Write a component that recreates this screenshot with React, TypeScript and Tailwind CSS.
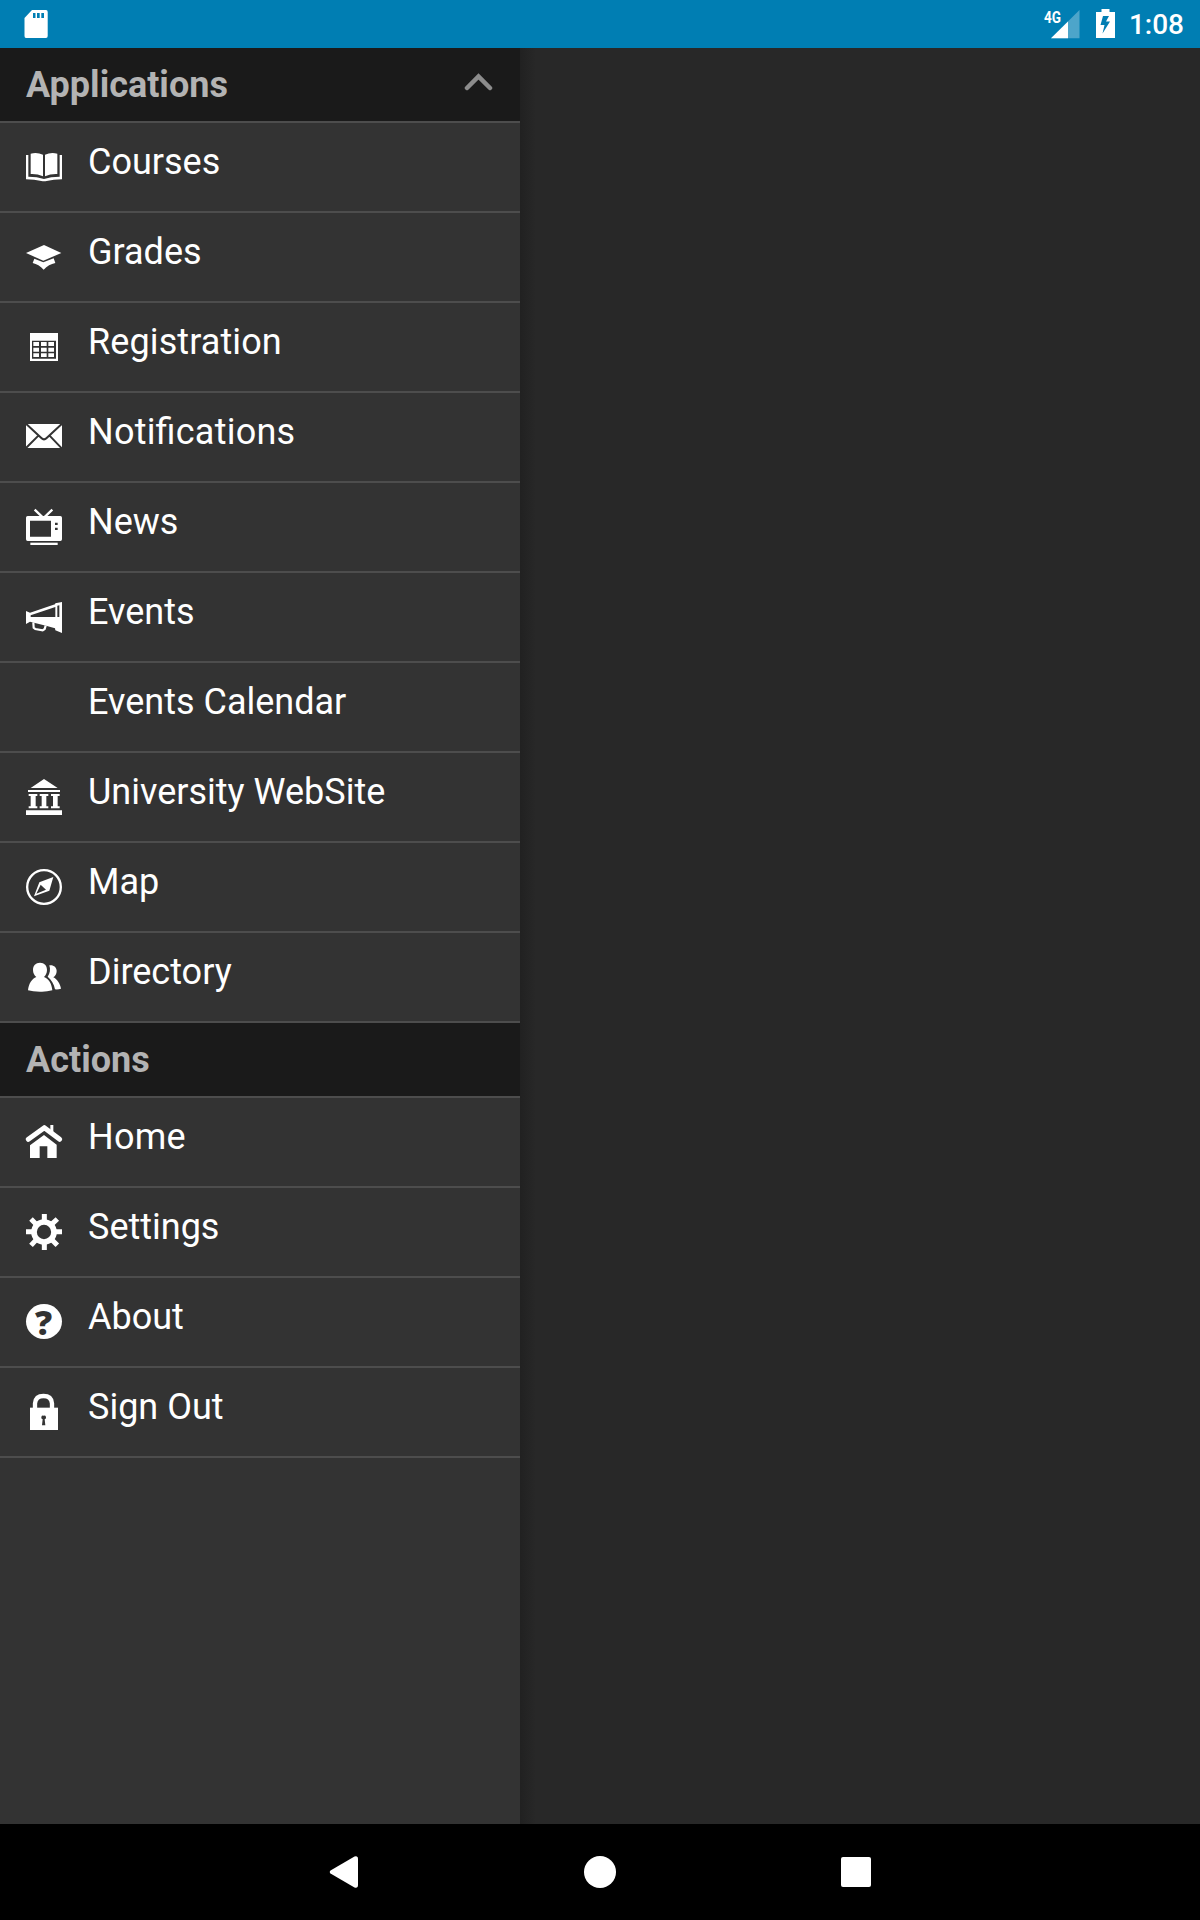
import React from "react";
import clsx from "clsx";

const icons: Record<string, React.ReactNode> = {
  courses: (
    <>
      <path d="M0 18H7V83Q34 83 54 90Q74 83 101 83V18H108V91Q82 91 62 96Q54 98 46 96Q26 91 0 91Z" />
      <path d="M14 14Q33 9 51 17V82Q34 74 14 75Z" />
      <path d="M57 17Q75 9 94 14V75Q74 74 57 82Z" />
    </>
  ),
  grades: (
    <>
      <path d="M0 42L54 18L106 42L52 65Z" />
      <path d="M25 59L52 70L83 58L88 72Q68 76 53 92Q38 76 20 72Z" />
    </>
  ),
  registration: (
    <>
      <path fillRule="evenodd" d="M12 12H96V96H12ZM18 35V89H90V35Z" />
      <path d="M22 39H39V51H22ZM45 39H62V51H45ZM67 39H84V51H67ZM22 56H39V68H22ZM45 56H62V68H45ZM67 56H84V68H67ZM22 73H39V84H22ZM45 73H62V84H45ZM67 73H84V84H67Z" />
    </>
  ),
  notifications: (
    <>
      <path d="M0 15H108V87H0Z" />
      <path d="M0 14L46 57Q54 65 62 57L108 14M38 49L0 87M70 49L108 89" fill="none" stroke="#333" strokeWidth="6" />
    </>
  ),
  news: (
    <>
      <path d="M26 2L51 26M79 2L54 26" fill="none" stroke="#fff" strokeWidth="7" />
      <path
        fillRule="evenodd"
        d="M5 21H103Q108 21 108 26V91Q108 96 103 96H5Q0 96 0 91V26Q0 21 5 21ZM12 35V83H75V35ZM87 41V48H95V41ZM87 56V63H95V56Z"
      />
      <path d="M13 101H95V108H13Z" />
    </>
  ),
  events: (
    <>
      <path
        fillRule="evenodd"
        d="M0 36L12 41L87 16L88 13L108 9V102L88 94L87 88L60 80L12 68L0 75ZM14 49V54H88V24ZM94 20V54H100V19Z"
      />
      <path d="M22 70L23 86L28 90L50 94L56 90L59 80" fill="none" stroke="#fff" strokeWidth="6.500" />
    </>
  ),
  university: (
    <path d="M54 0L95 27H14ZM6 33H102V39H6ZM8 45H34V51H29V82H34V88H8V82H14V51H8ZM41 45H67V51H61V82H67V88H41V82H47V51H41ZM75 45H101V51H95V82H101V88H75V82H81V51H75ZM0 94H108V108H0Z" />
  ),
  map: (
    <>
      <circle cx="54" cy="54" r="50.500" fill="none" stroke="#fff" strokeWidth="7" />
      <path fillRule="evenodd" d="M82 24L70 65L24 82L40 40ZM44 47L31 74L60 62Z" />
    </>
  ),
  directory: (
    <>
      <path d="M42 11C55 11 63 20 63 33C63 42 59 50 54 54C67 59 77 72 79 94Q60 99 42 98Q20 98 6 94C8 74 18 59 31 54C25 50 21 42 21 33C21 20 29 11 42 11Z" />
      <path d="M70 19C82 17 92 24 92 36C92 45 88 51 82 55C94 61 103 75 105 89Q97 92 87 91C84 75 76 62 65 53C72 44 74 30 70 19Z" />
    </>
  ),
  home: (
    <>
      <path d="M7 46L55 11L101 46" fill="none" stroke="#fff" strokeWidth="15" strokeLinecap="round" strokeLinejoin="round" />
      <path d="M73 3H82V26H73Z" />
      <path d="M54 33L92 62V102H64V67H41V102H12V64Z" />
    </>
  ),
  settings: (
    <>
      <circle cx="54" cy="54" r="30" fill="none" stroke="#fff" strokeWidth="17" />
      <path
        d="M55 0V20M55 88V108M0 53H20M88 53H108M15 15L29 29M79 79L94 94M94 15L79 29M15 94L29 79"
        fill="none"
        stroke="#fff"
        strokeWidth="15"
      />
    </>
  ),
  about: (
    <>
      <ellipse cx="54" cy="52.5" rx="54" ry="52.5" />
      <text x="53" y="94" textAnchor="middle" fill="#333" fontFamily="'Open Sans', sans-serif" fontWeight="800" fontSize="102">
        ?
      </text>
    </>
  ),
  signout: (
    <>
      <path d="M27 44V28Q29 6 52.500 6Q76 6 78 28V44" fill="none" stroke="#fff" strokeWidth="13" />
      <path d="M12 41H96V108H12Z" />
      <path d="M53 65A5.500 5.500 0 0 1 56 76L58 94H48L50 76A5.500 5.500 0 0 1 53 65Z" fill="#333" />
    </>
  ),
};

interface MenuItemProps {
  label: string;
  icon?: string;
  textClass?: string;
}

const applications: MenuItemProps[] = [
  { label: "Courses", icon: "courses" },
  { label: "Grades", icon: "grades" },
  { label: "Registration", icon: "registration", textClass: "tracking-[0.1px]" },
  {
    label: "Notifications",
    icon: "notifications",
    textClass: "tracking-[0.22px] [font-feature-settings:'liga']",
  },
  { label: "News", icon: "news" },
  { label: "Events", icon: "events" },
  { label: "Events Calendar" },
  { label: "University WebSite", icon: "university" },
  { label: "Map", icon: "map" },
  { label: "Directory", icon: "directory" },
];

const actions: MenuItemProps[] = [
  { label: "Home", icon: "home", textClass: "tracking-[0.25px]" },
  { label: "Settings", icon: "settings" },
  { label: "About", icon: "about" },
  { label: "Sign Out", icon: "signout" },
];

const MenuItem: React.FC<MenuItemProps> = ({ label, icon, textClass }) => (
  <li className="flex h-[90px] items-start border-b-2 border-[#4d4d4d] pl-[26px]">
    <svg viewBox="0 0 108 108" className="mt-[26px] size-9 shrink-0 overflow-visible fill-white">
      {icon && icons[icon]}
    </svg>
    <span className={clsx("ml-[26px] mt-[18px] text-[36px] leading-[42px] text-white", textClass)}>
      {label}
    </span>
  </li>
);

interface SectionHeaderProps {
  title: string;
  children?: React.ReactNode;
}

const SectionHeader: React.FC<SectionHeaderProps> = ({ title, children }) => (
  <div className="flex h-[75px] items-start justify-between border-b-2 border-[#4d4d4d] bg-[#1a1a1a] pl-[26px] pr-[26px]">
    <h2 className="mt-4 text-[36px] leading-[42px] font-bold text-[#b3b3b3]">{title}</h2>
    {children}
  </div>
);

const StatusBar = () => (
  <header className="flex h-12 shrink-0 items-start bg-[#007eb3] pl-6 pr-4 text-white">
    <svg viewBox="0 0 24 28" className="mt-2.5 h-7 w-6 fill-white">
      <path
        fillRule="evenodd"
        d="M8 0H22Q23.700 0 23.700 2V26Q23.700 28 22 28H2Q.5 28 .5 26V8ZM9 3V8H11.500V3ZM13 3V8H15.700V3ZM17.300 3V8H20V3Z"
      />
    </svg>
    <svg viewBox="0 0 38 30" className="ml-auto mt-[9px] h-[30px] w-[38px] overflow-visible">
      <path d="M9 29.300L37.500 1V29.300Z" fill="#4da5ca" />
      <path d="M9 29.300L26 12.400V29.300Z" fill="#fff" />
      <text
        x="2"
        y="13.7"
        fill="#fff"
        fontFamily="Roboto, sans-serif"
        fontWeight="700"
        fontSize="16.5"
        textLength="17"
        lengthAdjust="spacingAndGlyphs"
      >
        4G
      </text>
    </svg>
    <svg viewBox="0 0 20 29" className="ml-4 mt-[9px] h-[29px] w-5 fill-white">
      <path fillRule="evenodd" d="M5.500 0H13.500V3H19V29H0V3H5.500ZM7 7L4.500 16H8.500L6.500 24.500L14 12.500H10L13 7Z" />
    </svg>
    <span className="ml-[13px] mt-2 text-[28px] leading-[33px] font-medium">1:08</span>
  </header>
);

const NavBar = () => (
  <nav className="flex h-24 shrink-0 justify-center bg-black">
    <button className="flex w-64 items-center justify-center">
      <svg viewBox="0 0 30 32" className="h-8 w-[30px] fill-white">
        <path d="M1.500 14.500L25.500 .5Q29 -.5 29 3V29Q29 32.500 25.500 31.500L1.500 17.500Q0 16 1.500 14.500Z" />
      </svg>
    </button>
    <button className="flex w-64 items-center justify-center">
      <span className="size-8 rounded-full bg-white" />
    </button>
    <button className="flex w-64 items-center justify-center">
      <span className="size-[30px] rounded-xs bg-white" />
    </button>
  </nav>
);

export default function App() {
  return (
    <div className="flex h-[1920px] w-[1200px] flex-col overflow-hidden font-['Roboto',sans-serif]">
      <StatusBar />
      <div className="flex flex-1 bg-[#282828]">
        <aside className="w-[520px] bg-[#333333]">
          <SectionHeader title="Applications">
            <svg viewBox="0 0 30 20" className="mt-6 h-5 w-[30px]">
              <path d="M3 16L14.500 4.500L26 16" fill="none" stroke="#8c8c8c" strokeWidth="4.5" strokeLinecap="round" />
            </svg>
          </SectionHeader>
          <ul>
            {applications.map((item) => (
              <MenuItem key={item.label} {...item} />
            ))}
          </ul>
          <SectionHeader title="Actions" />
          <ul>
            {actions.map((item) => (
              <MenuItem key={item.label} {...item} />
            ))}
          </ul>
        </aside>
        {/* Drawer edge shadow */}
        <div className="w-4 bg-linear-to-r from-[#212121] to-[#282828]" />
      </div>
      <NavBar />
    </div>
  );
}
